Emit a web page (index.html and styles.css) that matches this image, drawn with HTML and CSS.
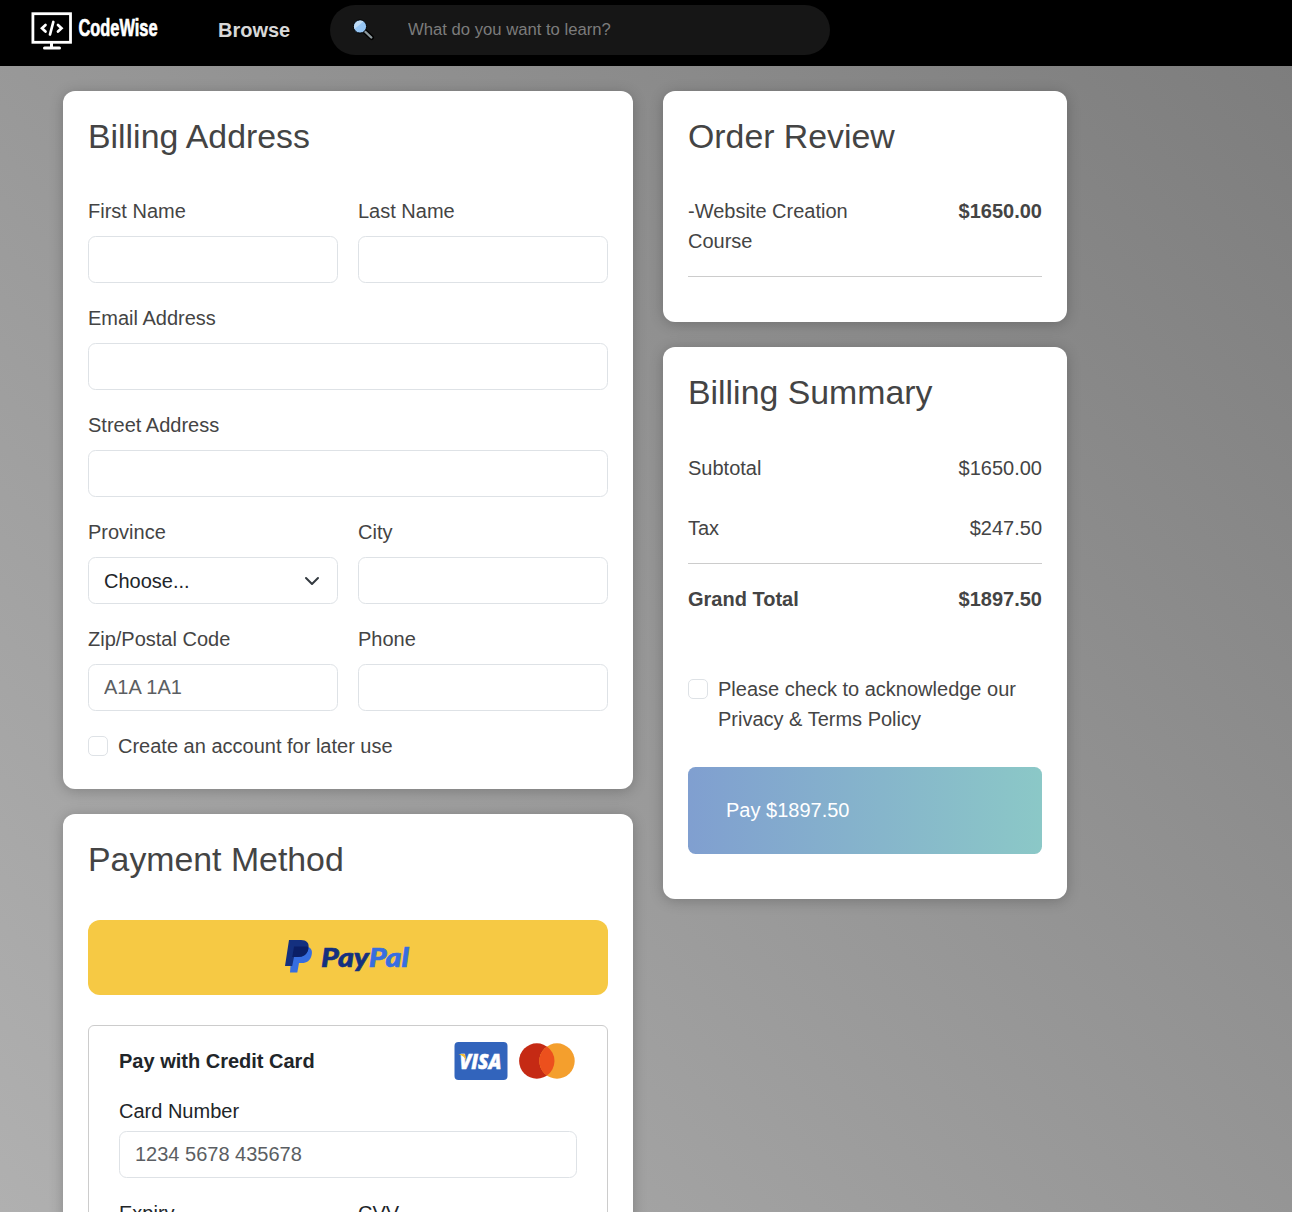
FILE: index.html
```html
<!DOCTYPE html>
<html lang="en">
<head>
<meta charset="utf-8">
<title>CodeWise – Checkout</title>
<link rel="stylesheet" href="styles.css">
</head>
<body>
<header class="navbar">
  <a class="brand" aria-label="CodeWise">
    <svg width="134" height="42" viewBox="0 0 134 42">
      <g fill="none" stroke="#fff">
        <rect x="2.900" y="3.700" width="37.600" height="28.600" stroke-width="2.800"/>
        <path d="M21.500 33v5M14.500 38h15" stroke-width="3" stroke-linecap="round"/>
        <path d="M15.500 15l-3.500 3.300 3.500 3.300M28 15l3.500 3.300-3.500 3.300M23.300 12l-3.300 12.500" stroke-width="2.700" stroke-linecap="round"/>
      </g>
      <text class="brand-text" x="48.500" y="26" textLength="79" lengthAdjust="spacingAndGlyphs">CodeWise</text>
    </svg>
  </a>
  <a class="browse">Browse</a>
  <div class="search">
    <svg width="22" height="22" viewBox="0 0 22 22">
      <path d="M12 12.500l6.500 6" stroke="#000" stroke-width="5" stroke-linecap="round"/>
      <path d="M12 12.500l6.300 6" stroke="#8d989c" stroke-width="2.400" stroke-linecap="round"/>
      <circle cx="7" cy="7.500" r="6.600" fill="#95c5f4" stroke="#000" stroke-width="1"/>
      <path d="M1.500 10A6.200 6.200 0 0 1 10.500 2.500z" fill="#bedcf6"/>
    </svg>
    <input class="search-input" type="text" placeholder="What do you want to learn?">
  </div>
</header>
<main class="checkout">
  <div class="column">
    <section class="card billing">
      <h2>Billing Address</h2>
      <div class="fields">
        <label>First Name<input type="text"></label>
        <label>Last Name<input type="text"></label>
        <label class="wide">Email Address<input type="text"></label>
        <label class="wide">Street Address<input type="text"></label>
        <label>Province
          <span class="select">Choose...<svg viewBox="0 0 16 16"><path fill="none" stroke="#343a40" stroke-linecap="round" stroke-linejoin="round" stroke-width="2" d="m2 5 6 6 6-6"/></svg></span>
        </label>
        <label>City<input type="text"></label>
        <label>Zip/Postal Code<input type="text" placeholder="A1A 1A1"></label>
        <label>Phone<input type="text"></label>
        <label class="check wide"><input type="checkbox"><span>Create an account for later use</span></label>
      </div>
    </section>
    <section class="card payment">
      <h2>Payment Method</h2>
      <div class="paypal">
        <svg width="130" height="40" viewBox="0 0 130 40">
          <path d="M7 8h13c6 0 8 4 6.500 9-1 5-5 7.500-9.500 7.500h-3L12.300 34H5z" transform="translate(2 .5)" fill="#376ee0"/>
          <path d="M6 2H18c5.500 0 8.500 3.200 7.500 8-1 6-5 9-10.500 9h-4l-1.800 9H2z" fill="#14307f"/>
          <path d="M11 8.500h13.500q1 1 .8 2.500C24.500 16 20.500 19 15 19H9.300z" fill="#0b1f66"/>
          <text class="paypal-text" x="38" y="28.500" textLength="88" lengthAdjust="spacingAndGlyphs"><tspan class="pay-dark">Pay</tspan><tspan class="pay-light">Pal</tspan></text>
        </svg>
      </div>
      <div class="credit">
        <div class="credit-head">
          <b>Pay with Credit Card</b>
          <svg width="123" height="40" viewBox="0 0 123 40">
            <rect x=".500" y="1" width="53" height="38" rx="4" fill="#3264bc"/>
            <text class="visa-text" x="5.500" y="27.500" textLength="42" lengthAdjust="spacingAndGlyphs">VISA</text>
            <path d="M4.500 13h5q1.500 0 2 2l1 5q-2-5-8-7z" fill="#f0bd35"/>
            <circle cx="82.800" cy="20" r="17.700" fill="#c52a14"/>
            <circle cx="103" cy="20" r="17.700" fill="#f49f2d"/>
            <path d="M92.900 5.470a17.700 17.700 0 0 1 0 29.060a17.700 17.700 0 0 1 0-29.060z" fill="#ec501d"/>
          </svg>
        </div>
        <label>Card Number<input type="text" placeholder="1234 5678 435678"></label>
        <div class="credit-row">
          <label>Expiry<input type="text"></label>
          <label>CVV<input type="text"></label>
        </div>
      </div>
    </section>
  </div>
  <div class="column">
    <section class="card order">
      <h2>Order Review</h2>
      <div class="line"><span class="item">-Website Creation Course</span><b>$1650.00</b></div>
      <hr>
    </section>
    <section class="card summary">
      <h2>Billing Summary</h2>
      <div class="line"><span>Subtotal</span><span>$1650.00</span></div>
      <div class="line tax"><span>Tax</span><span>$247.50</span></div>
      <hr>
      <div class="line"><b>Grand Total</b><b>$1897.50</b></div>
      <label class="check terms"><input type="checkbox"><span>Please check to acknowledge our Privacy &amp; Terms Policy</span></label>
      <button class="pay">Pay $1897.50</button>
    </section>
  </div>
</main>
</body>
</html>
```
FILE: styles.css
```css
* { box-sizing: border-box; }
html { height: 100%; overflow: hidden; }
body {
  margin: 0;
  height: 100%;
  overflow: hidden;
  font: 20px/30px "Liberation Sans", Arial, sans-serif;
  color: #444;
  background: linear-gradient(45deg, #b0b0b0, #7c7c7c);
}
svg { display: block; flex: none; }
.navbar {
  display: flex;
  align-items: flex-start;
  height: 66px;
  background: #000;
}
.brand { margin: 10px 0 0 30px; }
.brand-text {
  font: bold 24px "Liberation Sans Narrow", "Liberation Sans", sans-serif;
  fill: #fff;
  stroke: #fff;
  stroke-width: .7px;
}
.browse {
  width: 112px;
  margin: 15px 0 0 54px;
  font-weight: bold;
  color: #d8d8d8;
}
.search {
  display: flex;
  align-items: center;
  gap: 33px;
  width: 500px;
  height: 50px;
  margin-top: 5px;
  padding-left: 23px;
  border-radius: 25px;
  background: #161616;
}
input {
  display: block;
  width: 100%;
  height: 47px;
  padding: 0 15px;
  border: 1px solid #dee2e6;
  border-radius: 7.5px;
  background: #fff;
  font: inherit;
}
input::placeholder { color: #5b5e62; opacity: 1; }
.search-input {
  width: 380px;
  height: 40px;
  padding: 0;
  border: 0;
  background: none;
  font-size: 16.67px;
}
.search-input::placeholder { color: #7c7c7c; }
.checkout {
  display: grid;
  grid-template-columns: 570px 404px;
  gap: 30px;
  padding: 25px 0 0 63px;
}
.column {
  display: flex;
  flex-direction: column;
  gap: 25px;
}
.card {
  padding: 25px;
  border-radius: 12px;
  background: #fff;
  box-shadow: 0 2px 14px rgba(0, 0, 0, .22);
}
.billing { height: 698px; }
.payment { height: 720px; }
.order { height: 231px; }
.summary { height: 552px; }
h2 {
  height: 40px;
  margin: 0 0 40px;
  font-size: 33.85px;
  font-weight: normal;
  line-height: 40px;
}
.summary h2 { margin-bottom: 41px; }
.fields {
  display: grid;
  grid-template-columns: 250px 250px;
  gap: 20px;
}
.wide { grid-column: 1 / -1; }
label {
  display: flex;
  flex-direction: column;
  gap: 10px;
}
.select {
  display: flex;
  align-items: center;
  justify-content: space-between;
  height: 47px;
  padding: 0 15px;
  border: 1px solid #dee2e6;
  border-radius: 7.5px;
  color: #212529;
}
.select svg { width: 20px; height: 16px; }
.check { flex-direction: row; }
.check input {
  appearance: none;
  flex: none;
  width: 20px;
  height: 20px;
  margin: 5px 0 0;
  padding: 0;
  border-radius: 5px;
}
.paypal {
  display: flex;
  justify-content: center;
  align-items: center;
  height: 75px;
  margin-top: 41px;
  border-radius: 12px;
  background: #f6c944;
}
.credit {
  margin-top: 30px;
  padding: 15px 30px;
  border: 1px solid #ccc;
  border-radius: 6px;
  color: #212529;
}
.credit-head {
  display: flex;
  justify-content: space-between;
  align-items: center;
  height: 40px;
  margin-bottom: 15px;
}
.credit label { gap: 5px; }
.credit-row {
  display: grid;
  grid-template-columns: 219px 219px;
  gap: 20px;
  margin-top: 20px;
}
.visa-text {
  font: italic 800 21px "Open Sans", sans-serif;
  fill: #fff;
  stroke: #fff;
  stroke-width: .5px;
}
.paypal-text {
  font: italic 900 27px Lato, sans-serif;
  stroke-width: .6px;
}
.pay-dark { fill: #14307f; stroke: #14307f; }
.pay-light { fill: #376ee0; stroke: #376ee0; }
.line {
  display: flex;
  justify-content: space-between;
}
.item { width: 200px; }
.tax { margin-top: 30px; }
hr {
  height: 1px;
  margin: 20px 0;
  border: 0;
  background: #ccc;
}
.terms { margin-top: 60px; }
.pay {
  display: block;
  width: 100%;
  height: 87px;
  margin-top: 33px;
  padding: 0 38px 2px;
  border: 0;
  border-radius: 7.5px;
  font: inherit;
  text-align: left;
  color: #fff;
  background: linear-gradient(90deg, #809fd0, #8bc8c7);
}
```
